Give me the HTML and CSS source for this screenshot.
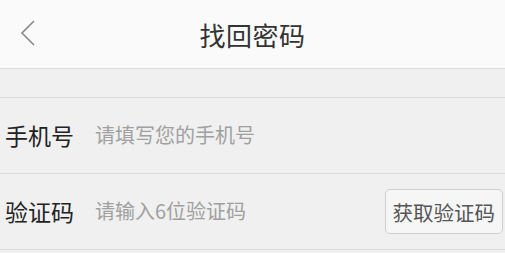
FILE: index.html
```html
<!DOCTYPE html>
<html lang="zh-CN">
<head>
    <meta charset="UTF-8" />
    <meta name="viewport" content="width=device-width, initial-scale=1.0" />
    <title>找回密码</title>
    <link rel="stylesheet" href="styles.css">
</head>
<body>
    <!-- Top bar with back arrow -->
    <div class="header-bar">
        <a class="back" href="#">
            <svg width="16" height="26" viewBox="0 0 16 26">
                <polyline points="14,1 2,13 14,25" fill="none" stroke="#888" stroke-width="1.6" />
            </svg>
        </a>
        <h1>找回密码</h1>
    </div>

    <div class="spacer"></div>

    <form class="form-list">
        <div class="form-row">
            <label for="phone">手机号</label>
            <input id="phone" type="tel" placeholder="请填写您的手机号" />
        </div>
        <div class="form-row">
            <label for="code">验证码</label>
            <input id="code" type="text" placeholder="请输入6位验证码" />
            <button type="button" class="code-button">获取验证码</button>
        </div>
    </form>
</body>
</html>
```

FILE: styles.css
```css
body {
    font-family: "Noto Sans CJK SC", "Noto Sans", sans-serif;
    margin: 0;
    background: #f0f0f0;
    color: #222;
}

.header-bar {
    height: 68px;
    background: #fafafa;
    border-bottom: 1px solid #dcdcdc;
    display: flex;
    align-items: center;
    justify-content: center;
    position: relative;
}

.header-bar .back {
    position: absolute;
    left: 20px;
    top: 20px;
    display: block;
    line-height: 0;
}

.header-bar h1 {
    margin: 0;
    font-size: 26px;
    font-weight: normal;
    color: #333;
    letter-spacing: 0.5px;
}

.spacer {
    height: 28px;
    border-bottom: 1px solid #dcdcdc;
}

.form-row {
    height: 75px;
    border-bottom: 1px solid #dcdcdc;
    display: flex;
    align-items: center;
    padding: 0 2px 0 5px;
}

.form-row label {
    font-size: 23px;
    width: 90px;
    color: #222;
    margin-top: -2px;
}

.form-row input {
    flex: 1;
    border: none;
    background: transparent;
    font-family: inherit;
    font-size: 20px;
    padding: 0;
    outline: none;
    color: #333;
    margin-top: -2px;
}

.form-row input::placeholder {
    color: #a0a0a0;
}

.code-button {
    height: 45px;
    padding: 0 7px;
    border: 1px solid #cfcfcf;
    border-radius: 5px;
    background: #f6f6f6;
    font-family: inherit;
    font-size: 20.5px;
    color: #555;
}
```
